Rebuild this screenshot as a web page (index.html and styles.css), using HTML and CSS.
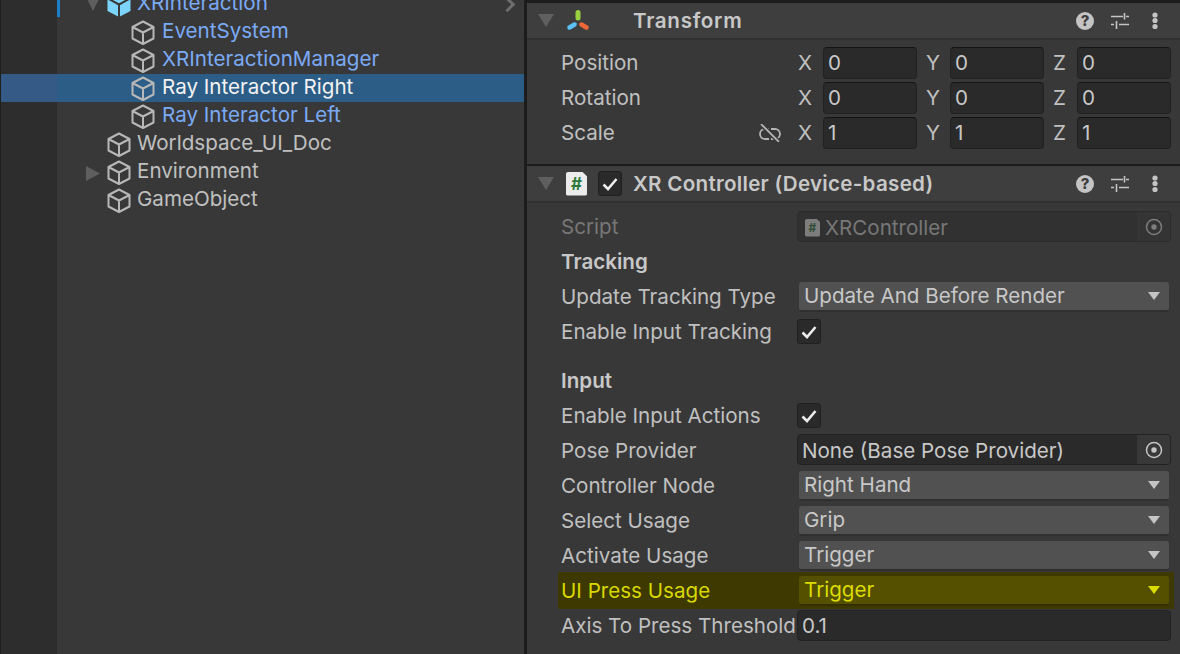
FILE: index.html
```html
<!DOCTYPE html>
<html lang="en">
<head>
<meta charset="utf-8">
<title>Unity Inspector</title>
<link rel="stylesheet" href="styles.css">
</head>
<body>
<svg class="defs" width="0" height="0" aria-hidden="true">
  <symbol id="cube" viewBox="0 0 24 25"><path d="M12 1.500 22.500 7v11.500L12 24 1.500 18.500V7zM1.500 7 12 12.500 22.500 7M12 12.500V24" fill="none" stroke="currentColor" stroke-width="2" stroke-linejoin="round"/></symbol>
  <symbol id="sliders" viewBox="0 0 18 18"><path d="M0 4.500h12M15 4.500h3M13.500 1v6.500M0 12.500h3M8 12.500h10M5.500 9v8" fill="none" stroke="currentColor" stroke-width="1.600"/></symbol>
  <symbol id="dots" viewBox="0 0 6 18"><circle cx="3" cy="3" r="2.600" fill="currentColor"/><circle cx="3" cy="8.500" r="2.600" fill="currentColor"/><circle cx="3" cy="14.500" r="2.600" fill="currentColor"/></symbol>
  <symbol id="target" viewBox="0 0 18 18"><circle cx="9" cy="9" r="7.500" fill="none" stroke="currentColor" stroke-width="1.500"/><circle cx="9" cy="9" r="2.700" fill="currentColor"/></symbol>
  <symbol id="check" viewBox="0 0 16 14"><path d="M1.500 7.500 6 12 14.500 2" fill="none" stroke="currentColor" stroke-width="2.600"/></symbol>
</svg>

<main class="app">
  <section class="hierarchy">
    <div class="tree">
      <div class="tree-row"><span class="gutter"><i class="gutter-mark"></i></span><span class="arrow arrow-down"></span><svg class="blue-cube" viewBox="0 0 24 25"><path d="M12 0 23.500 6v13L12 25 .5 19V6z" fill="#7dd4fb"/><path d="M1 6.500 12 12.500 23 6.500M12 12.500V25" fill="none" stroke="#383838" stroke-width="2"/></svg><span class="name prefab">XRInteraction</span><span class="chevron"></span></div>
      <div class="tree-row child"><span class="gutter"></span><svg class="cube"><use href="#cube"/></svg><span class="name prefab">EventSystem</span></div>
      <div class="tree-row child"><span class="gutter"></span><svg class="cube"><use href="#cube"/></svg><span class="name prefab">XRInteractionManager</span></div>
      <div class="tree-row child selected"><span class="gutter"></span><svg class="cube"><use href="#cube"/></svg><span class="name">Ray Interactor Right</span></div>
      <div class="tree-row child"><span class="gutter"></span><svg class="cube"><use href="#cube"/></svg><span class="name prefab">Ray Interactor Left</span></div>
      <div class="tree-row"><span class="gutter"></span><span class="arrow"></span><svg class="cube"><use href="#cube"/></svg><span class="name">Worldspace_UI_Doc</span></div>
      <div class="tree-row"><span class="gutter"></span><span class="arrow arrow-right"></span><svg class="cube"><use href="#cube"/></svg><span class="name">Environment</span></div>
      <div class="tree-row"><span class="gutter"></span><span class="arrow"></span><svg class="cube"><use href="#cube"/></svg><span class="name">GameObject</span></div>
    </div>
  </section>

  <section class="inspector">
    <header class="comp-header first">
      <span class="fold"></span>
      <svg class="transform-icon" viewBox="0 0 24 22"><path d="M12 2.500v5.500" stroke="#9ad040" stroke-width="5" stroke-linecap="round"/><path d="M3.500 17.500 8.500 14.500" stroke="#5cc1f5" stroke-width="4.500" stroke-linecap="round"/><path d="M15.500 14.500 20.500 17.500" stroke="#f0683a" stroke-width="4.500" stroke-linecap="round"/></svg>
      <span class="icon-slot-empty"></span>
      <h2 class="comp-title">Transform</h2>
      <span class="help">?</span>
      <svg class="tool sliders"><use href="#sliders"/></svg>
      <svg class="tool dots"><use href="#dots"/></svg>
    </header>
    <div class="transform-body">
      <div class="vec-row"><span class="label">Position</span><div class="vec"><span class="axis">X</span><span class="input">0</span><span class="axis">Y</span><span class="input">0</span><span class="axis">Z</span><span class="input">0</span></div></div>
      <div class="vec-row"><span class="label">Rotation</span><div class="vec"><span class="axis">X</span><span class="input">0</span><span class="axis">Y</span><span class="input">0</span><span class="axis">Z</span><span class="input">0</span></div></div>
      <div class="vec-row"><span class="label label-link">Scale<svg class="link" viewBox="0 0 22 18"><path d="M10 5H6a5 5 0 0 0 0 10h4M12 5h4a5 5 0 0 1 0 10h-4" fill="none" stroke="currentColor" stroke-width="1.800"/><path d="M2 0 20 18" stroke="#383838" stroke-width="4.500"/><path d="M2 0 20 18" stroke="currentColor" stroke-width="1.800"/></svg></span><div class="vec"><span class="axis">X</span><span class="input">1</span><span class="axis">Y</span><span class="input">1</span><span class="axis">Z</span><span class="input">1</span></div></div>
    </div>

    <header class="comp-header">
      <span class="fold"></span>
      <span class="script-icon"><b>#</b></span>
      <span class="checkbox header-check"><svg class="check"><use href="#check"/></svg></span>
      <h2 class="comp-title">XR Controller (Device-based)</h2>
      <span class="help">?</span>
      <svg class="tool sliders"><use href="#sliders"/></svg>
      <svg class="tool dots"><use href="#dots"/></svg>
    </header>
    <div class="props">
      <div class="row disabled"><span class="label">Script</span><span class="field object script-field"><span class="script-icon small"><b>#</b></span>XRController<span class="picker"><svg class="target"><use href="#target"/></svg></span></span></div>
      <div class="row"><strong class="heading">Tracking</strong></div>
      <div class="row"><span class="label">Update Tracking Type</span><span class="dropdown">Update And Before Render</span></div>
      <div class="row"><span class="label">Enable Input Tracking</span><span class="checkbox"><svg class="check"><use href="#check"/></svg></span></div>
      <div class="row after-space"><strong class="heading">Input</strong></div>
      <div class="row"><span class="label">Enable Input Actions</span><span class="checkbox"><svg class="check"><use href="#check"/></svg></span></div>
      <div class="row"><span class="label">Pose Provider</span><span class="field object pose">None (Base Pose Provider)<span class="picker"><svg class="target"><use href="#target"/></svg></span></span></div>
      <div class="row"><span class="label">Controller Node</span><span class="dropdown">Right Hand</span></div>
      <div class="row"><span class="label">Select Usage</span><span class="dropdown">Grip</span></div>
      <div class="row"><span class="label">Activate Usage</span><span class="dropdown">Trigger</span></div>
      <div class="row highlight"><span class="label">UI Press Usage</span><span class="dropdown">Trigger</span></div>
      <div class="row"><span class="label">Axis To Press Threshold</span><span class="field">0.1</span></div>
    </div>
  </section>
</main>
</body>
</html>
```
FILE: styles.css
```css
* { box-sizing: border-box; }
html, body { margin: 0; height: 654px; overflow: hidden; background: #383838; }
body { font-family: Inter, "Liberation Sans", sans-serif; font-size: 20.600px; color: #c0c0c0; }
.defs { position: absolute; }
.app { display: flex; height: 654px; overflow: hidden; }

/* Hierarchy */
.hierarchy { width: 527px; flex: none; border-right: 3px solid #1c1c1c; overflow: hidden;
  background: linear-gradient(90deg, #1f1f1f 1px, #2d2d2d 1px, #2d2d2d 57px, #383838 57px); }
.tree { margin-top: -10px; }
.tree-row { display: flex; align-items: center; height: 28px; position: relative; }
.gutter { width: 57px; height: 100%; flex: none; border-left: 1px solid #1f1f1f; position: relative; }
.gutter-mark { position: absolute; right: -3px; top: 0; bottom: 1px; width: 3px; background: #1a7fc6; }
.arrow { width: 14px; margin: 0 7px 0 29px; flex: none; }
.arrow-down { height: 14px; background: #5e5e5e; clip-path: polygon(0 0, 100% 0, 50% 100%); }
.arrow-right { height: 15px; background: #5e5e5e; clip-path: polygon(0 0, 100% 50%, 0 100%); margin-top: 3px; }
.cube { width: 24px; height: 25px; color: #b8b8b8; flex: none; margin-top: 1px; }
.blue-cube { width: 24px; height: 25px; flex: none; }
.child .cube { margin-left: 74px; }
.name { margin: 0 0 4px 6px; white-space: nowrap; color: #c0c0c0; }
.child .name { margin-left: 7px; }
.prefab { color: #7baaf5; }
.tree-row .prefab { color: #7baaf5; }
.selected { background: #2c5d87; }
.selected .gutter { background: #365a86; }
.selected .name { color: #f2f2f2; }
.chevron { position: absolute; left: 502px; top: 9px; width: 11px; height: 11px; border-top: 3px solid #6e6e6e; border-right: 3px solid #6e6e6e; transform: rotate(45deg); }

/* Inspector */
.inspector { flex: 1; min-width: 0; }
.comp-header { display: flex; align-items: center; height: 39px; background: #3e3e3e; border-top: 2px solid #1c1c1c; border-bottom: 2px solid #303030; }
.comp-header.first { border-top-width: 3px; height: 40px; }
.fold { width: 16px; height: 13px; margin-left: 11px; background: #5f5f5f; clip-path: polygon(0 0, 100% 0, 50% 100%); flex: none; }
.transform-icon { width: 24px; height: 22px; margin-left: 12px; flex: none; }
.icon-slot-empty { width: 32px; flex: none; }
.comp-title { margin: 0 auto 0 11px; font-size: 20.600px; font-weight: 600; letter-spacing: .28px; color: #c8c8c8; white-space: nowrap; }
.first .comp-title { letter-spacing: .7px; }
.help { width: 18px; height: 18px; border-radius: 50%; background: #c4c4c4; color: #3e3e3e; font-size: 15px; font-weight: 800; line-height: 18px; text-align: center; flex: none; }
.tool { color: #c4c4c4; flex: none; }
.sliders { width: 18px; height: 18px; margin-left: 17px; }
.dots { width: 6px; height: 18px; margin: 0 22px 0 23px; }

.script-icon { width: 21px; height: 24px; margin-left: 12px; background: #ececec; flex: none; display: flex; align-items: center; justify-content: center; clip-path: polygon(0 0, 76% 0, 100% 20%, 100% 100%, 0 100%); border-radius: 2px; }
.script-icon b { color: #2b7a3b; font-size: 17px; font-weight: 700; }
.script-icon.small { width: 15px; height: 18px; margin: 0 5px 0 0; background: #7d7d7d; }
.script-icon.small b { font-size: 12px; color: #2f4d34; }
.checkbox { width: 24px; height: 25px; background: #2a2a2a; border: 1px solid #202020; border-radius: 3px; display: flex; align-items: center; justify-content: center; color: #eee; }
.header-check { margin-left: 11px; flex: none; }
.check { width: 16px; height: 14px; color: #ececec; }

.transform-body { padding: 5px 9px 14px 34px; }
.vec-row { display: flex; align-items: center; height: 35px; }
.label { white-space: nowrap; }
.vec-row .label { width: 236px; flex: none; }
.label-link { display: flex; align-items: center; justify-content: space-between; padding-right: 16px; }
.link { width: 22px; height: 18px; color: #b4b4b4; }
.vec { display: grid; grid-template-columns: 26px 94px 33px 94px 33px 94px; align-items: center; }
.axis { padding-left: 1px; }
.vec .axis:not(:first-child) { padding-left: 9px; }
.input { height: 32px; line-height: 29px; padding-left: 4px; background: #2a2a2a; border: 1px solid #212121; border-top-color: #141414; border-radius: 4px; color: #c8c8c8; }

.props { padding-top: 6px; }
.row { display: grid; grid-template-columns: 236px 1fr; align-items: center; height: 35px; padding: 0 9px 0 34px; }
.after-space { margin-top: 14px; }
.heading { font-weight: 600; color: #c8c8c8; }
.disabled .label { color: #777; }
.field { position: relative; display: flex; align-items: center; height: 31px; padding-left: 4px; background: #2a2a2a; border: 1px solid #222; border-radius: 4px; white-space: nowrap; color: #c8c8c8; }
.object { padding-top: 2px; }
.pose { margin-bottom: 2px; }
.script-field { padding-left: 7px; color: #777; background: #313131; border-color: #2c2c2c; }
.picker { position: absolute; right: 0; top: 0; bottom: 0; width: 33px; display: flex; align-items: center; justify-content: center; background: #383838; border-radius: 0 3px 3px 0; }
.script-field .picker { background: #343434; color: #777; }
.target { width: 18px; height: 18px; color: #c4c4c4; }
.script-field .target { color: #7d7d7d; }
.dropdown { position: relative; display: block; height: 30px; margin: 1px 2px 0; padding-left: 5px; line-height: 28px; background: #515151; border-bottom: 2px solid #2f2f2f; border-radius: 3px; color: #c8c8c8; }
.dropdown::after { content: ""; position: absolute; right: 9px; top: 10px; border-left: 6.500px solid transparent; border-right: 6.500px solid transparent; border-top: 8px solid #c4c4c4; }
.highlight { margin: 0 6px 0 31px; padding: 0 3px; background: #3d3900; box-shadow: 0 -1px 0 #3d3900, 0 1px 0 #3d3900; }
.highlight .label { color: #d8d800; }
.highlight .dropdown { background: #555000; border-bottom-color: #332f00; color: #dcdc00; }
.highlight .dropdown::after { border-top-color: #dcdc00; }
```
